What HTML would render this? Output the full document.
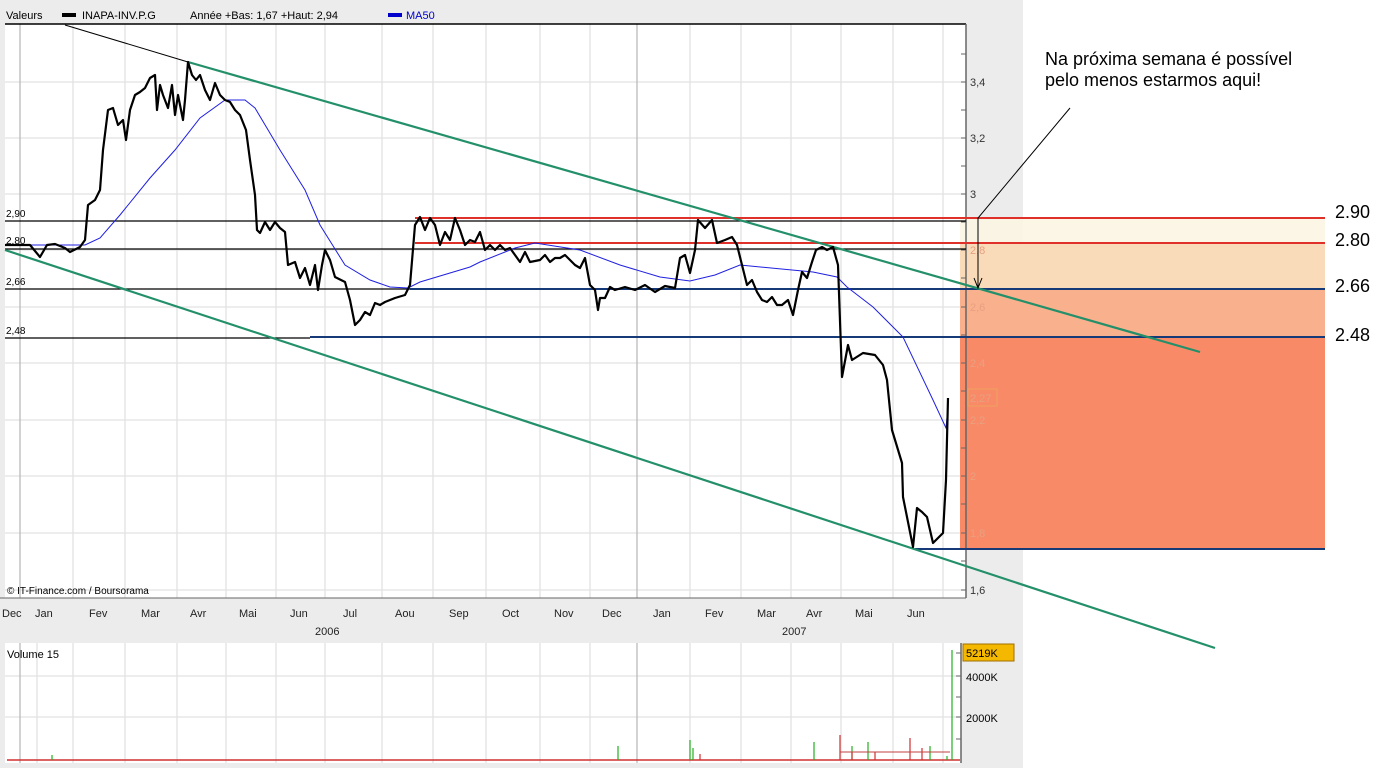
<!DOCTYPE html>
<html><head><meta charset="utf-8"><style>
html,body{margin:0;padding:0;background:#fff;}
svg{display:block;font-family:"Liberation Sans",sans-serif;}
</style></head><body>
<svg width="1375" height="768" viewBox="0 0 1375 768" xmlns="http://www.w3.org/2000/svg">
<rect x="0" y="0" width="1023" height="768" fill="#ececec"/>
<rect x="5" y="24" width="961" height="574" fill="#fff"/>
<rect x="5" y="643" width="956" height="120" fill="#fff"/>
<!-- grid -->
<g stroke="#e2e2e2" stroke-width="1.3">
<line x1="5" y1="82" x2="966" y2="82"/><line x1="5" y1="138" x2="966" y2="138"/><line x1="5" y1="194" x2="966" y2="194"/>
<line x1="5" y1="250" x2="966" y2="250"/><line x1="5" y1="307" x2="966" y2="307"/><line x1="5" y1="363" x2="966" y2="363"/>
<line x1="5" y1="420" x2="966" y2="420"/><line x1="5" y1="476" x2="966" y2="476"/><line x1="5" y1="533" x2="966" y2="533"/>
<line x1="5" y1="590" x2="966" y2="590"/>
<line x1="5" y1="676" x2="961" y2="676"/><line x1="5" y1="717" x2="961" y2="717"/>
</g>
<g stroke="#e2e2e2" stroke-width="1.3">
<path d="M73 24V598M125 24V598M177 24V598M226 24V598M276 24V598M325 24V598M382 24V598M433 24V598M486 24V598M540 24V598M590 24V598M690 24V598M741 24V598M791 24V598M841 24V598M893 24V598M943 24V598"/>
<path d="M37 643V763M73 643V763M125 643V763M177 643V763M226 643V763M276 643V763M325 643V763M382 643V763M433 643V763M486 643V763M540 643V763M590 643V763M690 643V763M741 643V763M791 643V763M841 643V763M893 643V763M943 643V763"/>
</g>
<path d="M20 24V598M637 24V598M20 643V763M637 643V763" stroke="#bbb" stroke-width="1.3"/>
<!-- colored bands -->
<rect x="960" y="218" width="365" height="25" fill="#fbf5e2" opacity="0.9"/>
<rect x="960" y="243" width="365" height="46" fill="#fadbb9"/>
<rect x="960" y="289" width="365" height="48" fill="#f9b08d"/>
<rect x="960" y="337" width="365" height="212" fill="#f88a68"/>
<!-- header -->
<line x1="5" y1="24" x2="966" y2="24" stroke="#000" stroke-width="1.5"/>
<text x="6" y="19" font-size="11">Valeurs</text>
<rect x="62" y="13" width="14" height="4" fill="#000"/>
<text x="82" y="19" font-size="11">INAPA-INV.P.G</text>
<text x="190" y="19" font-size="11">Année +Bas: 1,67 +Haut: 2,94</text>
<rect x="388" y="13" width="14" height="4" fill="#00c"/>
<text x="406" y="19" font-size="11" fill="#00c">MA50</text>
<!-- axis -->
<line x1="966" y1="24" x2="966" y2="598" stroke="#666" stroke-width="1.5"/>
<g stroke="#666"><path d="M961 54h5M961 82h5M961 110h5M961 138h5M961 166h5M961 194h5M961 222h5M961 250h5M961 278h5M961 307h5M961 335h5M961 363h5M961 391h5M961 420h5M961 448h5M961 476h5M961 504h5M961 533h5M961 561h5M961 590h5"/></g>
<g font-size="11" fill="#333">
<text x="970" y="86">3,4</text><text x="970" y="142">3,2</text><text x="970" y="198">3</text>
</g>
<g font-size="11" fill="#e8a080">
<text x="970" y="254">2,8</text><text x="970" y="311">2,6</text><text x="970" y="367">2,4</text><text x="970" y="424">2,2</text><text x="970" y="480">2</text><text x="970" y="537">1,8</text>
<rect x="968" y="389" width="29" height="17" fill="none" stroke="#f0a060"/><text x="970" y="402">2,27</text>
</g>
<text x="970" y="594" font-size="11" fill="#333">1,6</text>
<text x="7" y="594" font-size="10">© IT-Finance.com / Boursorama</text>
<!-- months -->
<g font-size="11" fill="#222">
<text x="2" y="617">Dec</text><text x="35" y="617">Jan</text><text x="89" y="617">Fev</text><text x="141" y="617">Mar</text><text x="190" y="617">Avr</text><text x="239" y="617">Mai</text><text x="290" y="617">Jun</text><text x="343" y="617">Jul</text><text x="395" y="617">Aou</text><text x="449" y="617">Sep</text><text x="502" y="617">Oct</text><text x="554" y="617">Nov</text><text x="602" y="617">Dec</text><text x="653" y="617">Jan</text><text x="705" y="617">Fev</text><text x="757" y="617">Mar</text><text x="806" y="617">Avr</text><text x="855" y="617">Mai</text><text x="907" y="617">Jun</text>
<text x="315" y="635">2006</text><text x="782" y="635">2007</text>
</g>
<line x1="0" y1="598" x2="966" y2="598" stroke="#666"/>
<!-- horizontal levels -->
<g stroke-width="1.3">
<line x1="5" y1="221" x2="966" y2="221" stroke="#000"/>
<line x1="5" y1="249" x2="966" y2="249" stroke="#000"/>
<line x1="5" y1="289" x2="410" y2="289" stroke="#000"/>
<line x1="5" y1="338" x2="310" y2="338" stroke="#000"/>
<line x1="415" y1="218" x2="1325" y2="218" stroke="#e0302a" stroke-width="2"/>
<line x1="415" y1="243" x2="1325" y2="243" stroke="#e0302a" stroke-width="2"/>
<line x1="410" y1="289" x2="1325" y2="289" stroke="#163a78" stroke-width="2"/>
<line x1="310" y1="337" x2="1325" y2="337" stroke="#163a78" stroke-width="2"/>
<line x1="915" y1="549" x2="1325" y2="549" stroke="#163a78" stroke-width="2"/>
</g>
<g font-size="10" fill="#000"><text x="6" y="217">2,90</text><text x="6" y="244">2,80</text><text x="6" y="285">2,66</text><text x="6" y="334">2,48</text></g>
<!-- trend lines -->
<line x1="65" y1="25" x2="188" y2="62" stroke="#000" stroke-width="1"/>
<line x1="188" y1="62" x2="1200" y2="352" stroke="#23906a" stroke-width="2.2"/>
<line x1="5" y1="250" x2="1215" y2="648" stroke="#23906a" stroke-width="2.2"/>
<!-- MA -->
<polyline fill="none" stroke="#2020e0" stroke-width="1" points="5,245 85,245 100,238 120,215 150,178 175,150 200,118 225,100 245,100 255,108 280,150 305,190 320,225 345,265 370,280 390,287 408,288 420,282 440,276 470,267 480,262 515,248 535,243 580,250 620,265 660,277 690,281 715,275 740,265 813,272 837,277 847,287 873,307 903,337 933,400 946,428 948,407"/>
<!-- price -->
<polyline fill="none" stroke="#000" stroke-width="2.2" stroke-linejoin="round" points="5,245 30,245 40,257 47,245 55,244 65,248 70,252 80,247 85,240 88,205 95,200 100,190 103,150 108,110 113,108 118,125 123,120 126,140 130,110 135,95 140,92 145,88 150,78 155,75 157,110 160,85 163,95 168,108 172,85 175,115 178,95 183,120 185,100 188,62 192,75 196,80 200,75 205,90 210,100 215,83 220,95 225,100 230,102 235,110 240,115 246,130 250,160 255,195 257,230 260,233 265,222 270,230 275,222 280,228 285,232 288,265 295,262 300,278 305,268 310,285 315,265 318,290 322,265 325,250 330,260 335,277 345,282 350,300 355,325 360,320 365,312 370,315 375,303 380,305 385,302 395,298 405,295 410,285 415,225 420,217 425,230 430,218 435,225 440,245 445,232 450,240 455,218 460,230 465,245 470,240 475,242 480,232 485,250 490,245 495,250 500,245 505,250 510,248 515,255 520,262 525,252 530,262 540,260 545,255 550,262 555,258 560,258 565,255 575,265 580,268 585,258 590,285 595,290 598,310 600,298 605,298 610,287 615,290 625,287 635,290 645,285 655,292 665,286 675,288 680,258 685,255 690,273 695,250 698,220 705,228 712,220 717,243 725,240 732,237 737,245 742,265 747,285 752,280 757,292 762,300 767,302 772,297 777,305 782,305 788,300 793,315 798,290 802,272 807,278 812,262 816,250 822,247 827,250 833,247 838,265 842,377 848,345 852,360 863,353 875,355 883,365 887,380 892,430 902,463 903,497 913,547 917,508 922,512 927,517 933,543 943,533 946,480 948,398"/>
<!-- annotation -->
<text x="1045" y="65" font-size="18">Na próxima semana é possível</text>
<text x="1045" y="86" font-size="18">pelo menos estarmos aqui!</text>
<path d="M1070 108L978 218V287M974 278L978 288L982 278" fill="none" stroke="#000" stroke-width="1"/>
<g font-size="18"><text x="1335" y="218">2.90</text><text x="1335" y="246">2.80</text><text x="1335" y="292">2.66</text><text x="1335" y="341">2.48</text></g>
<!-- volume -->
<text x="7" y="658" font-size="11">Volume 15</text>
<line x1="961" y1="643" x2="961" y2="763" stroke="#666" stroke-width="1.5"/>
<g stroke="#666"><path d="M956 653h5M956 676h5M956 697h5M956 717h5M956 739h5"/></g>
<rect x="963" y="644" width="51" height="17" fill="#f5b800" stroke="#a07000"/>
<text x="966" y="657" font-size="11">5219K</text>
<text x="966" y="681" font-size="11">4000K</text>
<text x="966" y="722" font-size="11">2000K</text>
<line x1="7" y1="760" x2="960" y2="760" stroke="#d03030" stroke-width="1.5"/>
<g stroke="#20b020" stroke-width="1.2"><path d="M52 760v-5M618 760v-14M690 760v-20M693 760v-12M814 760v-18M852 760v-14M868 760v-18M930 760v-14M952 760V650M947 760v-4"/></g>
<g stroke="#d03030" stroke-width="1.2"><path d="M840 760v-25M910 760v-22M922 760v-12M875 760v-8M852 760v-8M700 760v-6"/></g>
<path d="M840 752H950" stroke="#c04040" stroke-width="1"/>
</svg>
</body></html>
